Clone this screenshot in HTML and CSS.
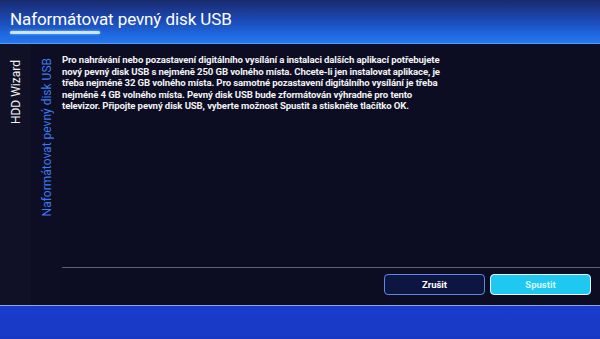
FILE: index.html
```html
<!DOCTYPE html>
<html lang="cs">
<head>
<meta charset="utf-8">
<link rel="stylesheet" href="styles.css">
</head>
<body>
<div class="screen">
  <header class="header">
    <h1 class="title">Naformátovat pevný disk USB</h1>
    <div class="title-bar"></div>
  </header>
  <main class="main">
    <div class="side side-1"><span class="side-text">HDD Wizard</span></div>
    <div class="side side-2"><span class="side-text active">Naformátovat pevný disk USB</span></div>
    <section class="content">
      <p class="desc">Pro nahrávání nebo pozastavení digitálního vysílání a instalaci dalších aplikací potřebujete<br>nový pevný disk USB s nejméně 250 GB volného místa. Chcete-li jen instalovat aplikace, je<br>třeba nejméně 32 GB volného místa. Pro samotné pozastavení digitálního vysílání je třeba<br>nejméně 4 GB volného místa. Pevný disk USB bude zformátován výhradně pro tento<br>televizor. Připojte pevný disk USB, vyberte možnost Spustit a stiskněte tlačítko OK.</p>
      <div class="actions">
        <button class="btn">Zrušit</button>
        <button class="btn btn-primary">Spustit</button>
      </div>
    </section>
  </main>
  <footer class="footer"></footer>
</div>
</body>
</html>
```
FILE: styles.css
```css
html, body {
  margin: 0;
  padding: 0;
  background: #0c0d22;
}
.screen {
  width: 600px;
  height: 339px;
  display: flex;
  flex-direction: column;
  overflow: hidden;
  font-family: Roboto, "Liberation Sans", sans-serif;
  color: #fff;
}
.header {
  height: 44px;
  flex: none;
  background: linear-gradient(180deg, #182a6e 0%, #1c48b2 45%, #1f6ce4 85%, #2378ee 100%);
  border-bottom: 1px solid #5a9cf0;
  padding: 0 0 0 10px;
  box-sizing: border-box;
  display: flex;
  flex-direction: column;
}
.title {
  margin: 9px 0 0 0;
  font-size: 17px;
  font-weight: 400;
  line-height: 20px;
  letter-spacing: -0.1px;
}
.title-bar {
  width: 90px;
  height: 3px;
  margin-top: 2px;
  background: #c8e6ff;
  border-radius: 2px;
  box-shadow: 0 0 3px #7fc0ff;
}
.main {
  flex: 1;
  display: flex;
  background: #0c0d22;
}
.side {
  width: 31px;
  flex: none;
  display: flex;
  justify-content: center;
  padding-top: 14px;
  box-sizing: border-box;
}
.side-1 {
  background: #101126;
}
.side-2 {
  background: #0d0e24;
}
.side-text {
  writing-mode: vertical-rl;
  transform: rotate(180deg);
  font-size: 12px;
  line-height: 14px;
  white-space: nowrap;
  height: max-content;
}
.side-1 .side-text {
  margin-top: 2px;
  color: #f2f2f2;
}
.active {
  color: #3b7af0;
  margin-top: 0;
}
.content {
  flex: 1;
  display: flex;
  flex-direction: column;
  padding-top: 10px;
}
.desc {
  margin: 0;
  font-size: 9.6px;
  font-weight: 700;
  line-height: 11.6px;
  letter-spacing: -0.12px;
  color: #f2f2f2;
  white-space: nowrap;
}
.actions {
  margin-top: auto;
  border-top: 1px solid #5a5e78;
  display: flex;
  justify-content: flex-end;
  gap: 5px;
  padding: 6px 9px 10px 0;
}
.btn {
  width: 101px;
  height: 21px;
  box-sizing: border-box;
  border: 1.5px solid #5f86e8;
  border-radius: 4px;
  background: #0d1640;
  color: #fff;
  font-family: Roboto, "Liberation Sans", sans-serif;
  font-weight: 700;
  font-size: 9.5px;
  padding: 0;
}
.btn-primary {
  background: #1ec8f0;
  border-color: #eaf8ff;
  color: #d8f6ff;
}
.footer {
  height: 33px;
  flex: none;
  border-top: 1px solid #7fa8f0;
  background: linear-gradient(180deg, #1a3ccc 0%, #1838c4 100%);
}
```
